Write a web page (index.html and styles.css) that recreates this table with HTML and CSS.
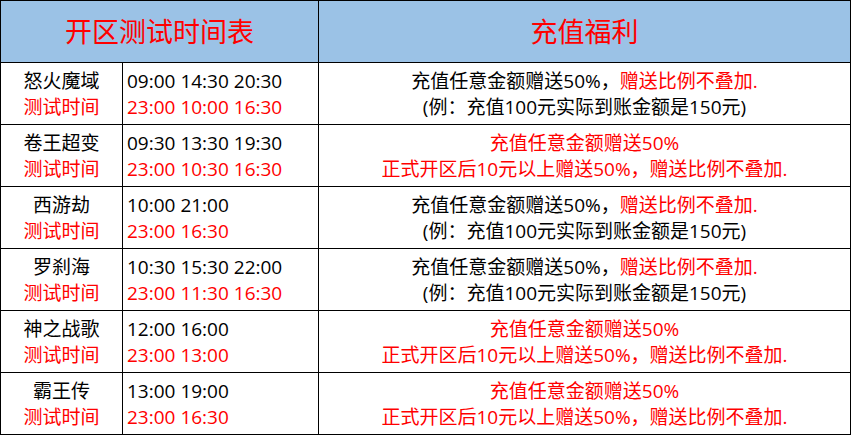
FILE: index.html
```html
<!DOCTYPE html>
<html lang="zh-CN">
<head>
<meta charset="utf-8">
<title>开区测试时间表</title>
<link rel="stylesheet" href="styles.css">
</head>
<body>
<div class="sheet">
  <div class="cell head span2">开区测试时间表</div>
  <div class="cell head">充值福利</div>

  <div class="cell name"><span>怒火魔域</span><span class="red">测试时间</span></div>
  <div class="cell time"><span>09:00 14:30 20:30</span><span class="red">23:00 10:00 16:30</span></div>
  <div class="cell bonus"><span>充值任意金额赠送50%，<span class="red">赠送比例不叠加.</span></span><span>(例：充值100元实际到账金额是150元)</span></div>

  <div class="cell name"><span>卷王超变</span><span class="red">测试时间</span></div>
  <div class="cell time"><span>09:30 13:30 19:30</span><span class="red">23:00 10:30 16:30</span></div>
  <div class="cell bonus red"><span>充值任意金额赠送50%</span><span>正式开区后10元以上赠送50%，赠送比例不叠加.</span></div>

  <div class="cell name"><span>西游劫</span><span class="red">测试时间</span></div>
  <div class="cell time"><span>10:00 21:00</span><span class="red">23:00 16:30</span></div>
  <div class="cell bonus"><span>充值任意金额赠送50%，<span class="red">赠送比例不叠加.</span></span><span>(例：充值100元实际到账金额是150元)</span></div>

  <div class="cell name"><span>罗刹海</span><span class="red">测试时间</span></div>
  <div class="cell time"><span>10:30 15:30 22:00</span><span class="red">23:00 11:30 16:30</span></div>
  <div class="cell bonus"><span>充值任意金额赠送50%，<span class="red">赠送比例不叠加.</span></span><span>(例：充值100元实际到账金额是150元)</span></div>

  <div class="cell name"><span>神之战歌</span><span class="red">测试时间</span></div>
  <div class="cell time"><span>12:00 16:00</span><span class="red">23:00 13:00</span></div>
  <div class="cell bonus red"><span>充值任意金额赠送50%</span><span>正式开区后10元以上赠送50%，赠送比例不叠加.</span></div>

  <div class="cell name"><span>霸王传</span><span class="red">测试时间</span></div>
  <div class="cell time"><span>13:00 19:00</span><span class="red">23:00 16:30</span></div>
  <div class="cell bonus red"><span>充值任意金额赠送50%</span><span>正式开区后10元以上赠送50%，赠送比例不叠加.</span></div>
</div>
</body>
</html>
```

FILE: styles.css
```css
html, body {
  margin: 0;
  padding: 0;
  background: #ffffff;
}

body {
  font-family: "Open Sans", "Noto Sans CJK SC", "Noto Sans", sans-serif;
  color: #000000;
}

.sheet {
  display: grid;
  grid-template-columns: 122px 196px 532px;
  grid-template-rows: repeat(7, 62px);
  width: 851px;
  border-left: 1px solid #000;
  border-top: 1px solid #000;
  box-sizing: border-box;
}

.cell {
  border-right: 1px solid #000;
  border-bottom: 1px solid #000;
  display: flex;
  flex-direction: column;
  justify-content: center;
  font-size: 19px;
  line-height: 26px;
  white-space: nowrap;
  overflow: hidden;
}

.head {
  background: #9bc2e6;
  color: #ff0000;
  font-size: 27px;
  line-height: 34px;
  align-items: center;
}

.span2 {
  grid-column: span 2;
}

.name {
  align-items: center;
}

.time {
  align-items: flex-start;
  padding-left: 4px;
}

.bonus {
  align-items: center;
}

.red {
  color: #ff0000;
}
```
